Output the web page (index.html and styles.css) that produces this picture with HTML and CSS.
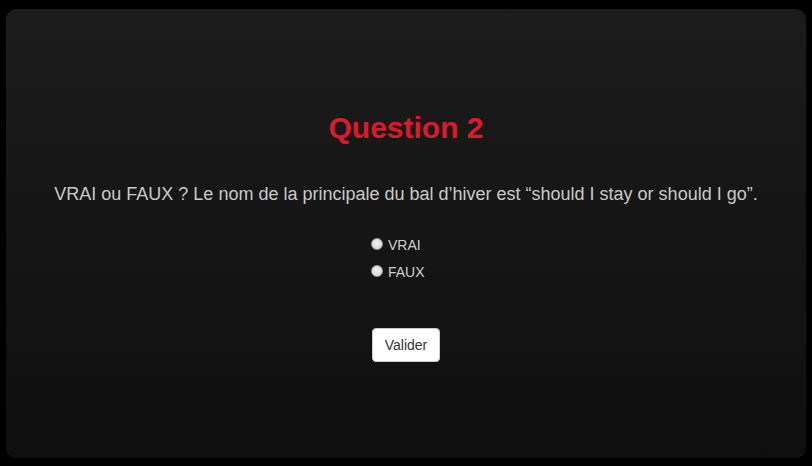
FILE: index.html
```html
<!DOCTYPE html>
<html lang="fr">
<head>
<meta charset="utf-8">
<title>Question 2</title>
<link rel="stylesheet" href="styles.css">
</head>
<body>
<div class="card">
  <h1 class="title">Question 2</h1>
  <p class="question">VRAI ou FAUX ? Le nom de la principale du bal d’hiver est “should I stay or should I go”.</p>
  <form class="form">
    <div class="choices">
      <label class="choice"><input type="radio" name="q2" value="vrai"> VRAI</label>
      <label class="choice"><input type="radio" name="q2" value="faux"> FAUX</label>
    </div>
    <button type="button" class="btn">Valider</button>
  </form>
</div>
</body>
</html>
```
FILE: styles.css
```css
* { box-sizing: border-box; }
html, body { margin: 0; height: 100%; }
body {
  background: #000;
  padding: 9px 6px 8px 6px;
  font-family: "Liberation Sans", Arial, sans-serif;
  font-size: 14px;
  line-height: 1.42857;
  color: #ccc;
}
.card {
  height: 449px;
  border-radius: 10px;
  background: linear-gradient(to bottom, #1c1c1c, #0f0f0f);
  display: flex;
  flex-direction: column;
  align-items: center;
  padding-top: 101px;
}
.title {
  margin: 0;
  font-size: 30px;
  line-height: 36px;
  font-weight: bold;
  color: #dc1a2c;
}
.question {
  margin: 35px 0 0 0;
  font-size: 18px;
  line-height: 26px;
  color: #cacaca;
}
.form {
  display: flex;
  flex-direction: column;
  align-items: center;
}
.choices {
  width: 80px;
  margin-top: 29px;
  display: flex;
  flex-direction: column;
  gap: 7px;
}
.choice {
  display: flex;
  align-items: center;
  height: 20px;
  color: #d0d0d0;
  white-space: nowrap;
}
.choice input {
  appearance: none;
  -webkit-appearance: none;
  margin: 0 5px 0 5px;
  width: 12px;
  height: 12px;
  border-radius: 50%;
  border: 1px solid #9a9a9a;
  background: radial-gradient(circle at 50% 40%, #f0f0f0, #d2d2d2);
  position: relative;
  top: -2px;
}
.btn {
  margin-top: 45px;
  font-family: inherit;
  font-size: 14px;
  line-height: 20px;
  padding: 6px 12px;
  background: #fff;
  color: #333;
  border: 1px solid #ccc;
  border-radius: 4px;
}
```
